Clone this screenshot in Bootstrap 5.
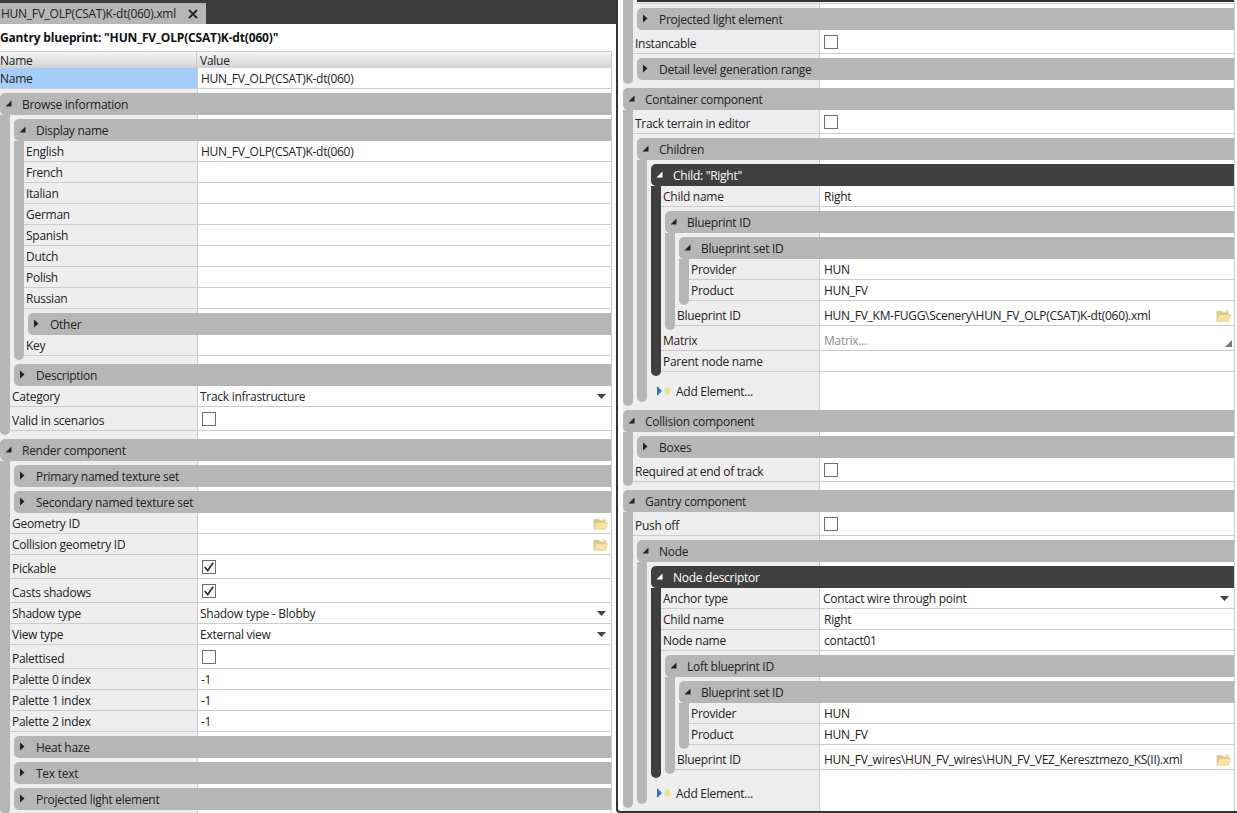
<!doctype html>
<html lang="en"><head><meta charset="utf-8"><title>Gantry blueprint</title>
<link href="https://cdn.jsdelivr.net/npm/bootstrap@5.3.0/dist/css/bootstrap.min.css" rel="stylesheet">
<style>
html,body{height:100%;overflow:hidden;background:#fff}
body{font-family:"Open Sans","Noto Sans",sans-serif;font-size:12px;line-height:21px;color:#222;letter-spacing:-.27px}
.shell{width:1237px;height:813px}
.lpane{width:616px;flex:none}
.rpane{width:621px;flex:none;border-left:2px solid #333;border-bottom:2px solid #333;border-bottom-left-radius:4px;padding-left:5px;padding-right:2px;height:813px;overflow:hidden}
.tabbar{height:24px;background:#3c3c3c;padding-top:3px}
.doc-tab{width:206px;height:21px;background:#b6b6b6;padding-left:1px;line-height:20px}
.doc-tab svg{margin-left:auto;margin-right:8px}
.doc-title{height:27px;font-weight:700;line-height:27px;color:#111;letter-spacing:-.16px}
.sheet{--col:197px;background:linear-gradient(to right,#eee var(--col),#ccc var(--col),#ccc calc(var(--col) + 1px),#fff calc(var(--col) + 1px));border-right:1px solid #ccc}
.rsheet{--col:196px;height:100%}
.lsheet{width:612px}
.hdr{height:17px;background:linear-gradient(#f4f4f4,#d4d4d4);line-height:17px;border-top:1px solid #ccc;border-right:1px solid #ccc}
.hdr>div:first-child{width:197px;border-right:1px solid #ccc}
.hdr>div:last-child{padding-left:3px}
.prow{height:21px;border-bottom:1px solid #ccc}
.prow.tall{height:24px;line-height:23px}
.prow.tall .plabel{padding-top:2px}
.plabel{flex:none;width:calc(var(--col) - var(--ind,0px));padding-left:2px;white-space:nowrap;overflow:hidden}
.plabel.sel{background:#a6cdfa;padding-left:0}
.pvalue{flex:1;padding-left:5px;min-width:0;white-space:nowrap;color:#222}
.lsheet .pvalue{padding-left:4px}
.pvalue.combo{padding-left:4px}
.lsheet .pvalue.combo{padding-left:3px}
.lsheet .cbx{margin-left:1px}
.grp{margin-top:4px}
.grp:first-child.headless{margin-top:0}
.grp .grp{margin-left:4px}
.ghd{height:22px;background:#b6b6b6;border-radius:5px 0 0 5px;display:flex;align-items:center;color:#222}
.ghd .ex{flex:none;width:16px;margin-right:6px;display:flex;justify-content:center;margin-top:-2px;line-height:0}
.ghd .gtxt{padding-top:2px;line-height:20px}
.gbd{display:flex}
.rail{flex:none;width:10px;background:#b6b6b6;border-radius:0 0 5px 5px}
.gin{flex:1;min-width:0;padding-bottom:4px}
.grp.dark>.ghd{background:#3f3f3f;color:#fff}
.grp.dark>.gbd>.rail{background:#3f3f3f}
.lv1{--ind:10px}.lv2{--ind:24px}.lv3{--ind:38px}.lv4{--ind:52px}.lv5{--ind:66px}
.cbx{width:14px;height:14px;border:1px solid #6f6f6f;background:#fff;display:block}
.addrow{height:22px;line-height:21px;padding-top:8px;overflow:visible}
.addrow .plabel{overflow:visible;padding-left:10px;display:flex;align-items:center;gap:4px}
.muted-val{color:#8d8d8d}
.caret{margin-right:5px;flex:none}
.ic-folder{margin-right:3px}
.ic-corner{margin-right:2px;margin-top:6px}
.stub{height:4px;margin-left:4px;border-top:2px solid #333;border-bottom:1px solid #ccc}
</style></head><body>
<div class="shell d-flex">
<div class="lpane">
 <div class="tabbar"><div class="doc-tab d-flex align-items-center"><span>HUN_FV_OLP(CSAT)K-dt(060).xml</span><svg width="10" height="10" viewBox="0 0 10 10"><path d="M1 1l8 8M9 1l-8 8" stroke="#222" stroke-width="1.8"/></svg></div></div>
 <div class="doc-title">Gantry blueprint: "HUN_FV_OLP(CSAT)K-dt(060)"</div>
 <div class="hdr d-flex lsheet"><div>Name</div><div>Value</div></div>
 <div class="sheet lsheet" id="L"></div>
</div>
<div class="rpane"><div class="sheet rsheet" id="R"></div></div>
</div>
<script>
const EX='<svg width="7" height="7" viewBox="0 0 7 7"><path d="M6.5 .5V6.5H.5z" fill="currentColor"/></svg>';
const CO='<svg width="6" height="9" viewBox="0 0 6 9"><path d="M1 .5L5.5 4.5 1 8.5z" fill="currentColor"/></svg>';
const FOLDER='<svg class="caret ic-folder" width="15" height="13" viewBox="0 0 16 13"><path d="M1 2h5l1 1.5h6V12H1z" fill="#e3c77f" stroke="#d8c48e" stroke-width=".7"/><path d="M3.5 5.5H15.5L13 12.5H1z" fill="#f9e5a0" stroke="#dcc68a" stroke-width=".7"/><path d="M10 1.5l3 .5 1 2" stroke="#c4c4c4" fill="none"/></svg>';
const DROP='<svg class="caret" width="9" height="5" viewBox="0 0 9 5"><path d="M0 0h9L4.5 5z" fill="#444"/></svg>';
const CORNER='<svg class="caret ic-corner" width="7" height="7" viewBox="0 0 7 7"><path d="M7 0V7H0z" fill="#777"/></svg>';
const ADD='<svg width="15" height="10" viewBox="0 0 15 10"><path d="M0 0l5 5-5 5z" fill="#2f6fd8"/><path d="M10.5 1v8M6.5 5h8M7.7 2.2l5.6 5.6M13.3 2.2l-5.6 5.6" stroke="#f0e07a" stroke-width="1.2"/></svg>';
const r=(l,v='',o={})=>({t:'r',l,v,...o});
const c=(l,ch)=>({t:'r',l,check:ch?1:0,tall:1});
const g=(l,kids,dark)=>({t:'g',l,kids,dark});
const a=()=>({t:'a'});
const CK='<svg width="12" height="12" viewBox="0 0 12 12" style="display:block"><path d="M1.7 6l3 3.5L10.2 1.8" fill="none" stroke="#333" stroke-width="1.8"/></svg>';
function esc(s){return s.replace(/&/g,'&amp;').replace(/</g,'&lt;')}
function build(items,lv){return items.map(i=>{
 const cl=lv?('lv'+lv):'';
 if(i.t==='s') return '<div class="stub"></div>';
 if(i.t==='r'){
  let val=i.check!==undefined?`<span class="cbx">${i.check?CK:''}</span>`:esc(i.v);
  return `<div class="prow d-flex ${i.tall?'tall':''} ${cl}"><div class="plabel ${i.sel?'sel':''}">${esc(i.l)}</div><div class="pvalue d-flex align-items-center justify-content-between ${i.muted?'muted-val':''} ${i.icon===DROP?'combo':''}"><span>${val}</span>${i.icon||''}</div></div>`;
 }
 if(i.t==='a') return `<div class="addrow d-flex ${cl}"><div class="plabel">${ADD}<span>Add Element...</span></div></div>`;
 const open=!!i.kids;
 const head=i.l?`<div class="ghd"><span class="ex">${open?EX:CO}</span><span class="gtxt">${esc(i.l)}</span></div>`:'';
 return `<div class="grp ${i.dark?'dark':''} ${i.l?'':'headless'}">${head}${open?`<div class="gbd"><div class="rail"></div><div class="gin">${build(i.kids,lv+1)}</div></div>`:''}</div>`;
}).join('')}
const L=[
 {t:'r',l:'Name',v:'HUN_FV_OLP(CSAT)K-dt(060)',sel:1},
 g('Browse information',[
  g('Display name',[
   r('English','HUN_FV_OLP(CSAT)K-dt(060)'),r('French'),r('Italian'),r('German'),r('Spanish'),r('Dutch'),r('Polish'),r('Russian'),
   g('Other'),r('Key')
  ]),
  g('Description'),
  r('Category','Track infrastructure',{icon:DROP}),c('Valid in scenarios')
 ]),
 g('Render component',[
  g('Primary named texture set'),g('Secondary named texture set'),
  r('Geometry ID','',{icon:FOLDER}),r('Collision geometry ID','',{icon:FOLDER}),
  c('Pickable',1),c('Casts shadows',1),
  r('Shadow type','Shadow type - Blobby',{icon:DROP}),r('View type','External view',{icon:DROP}),
  c('Palettised'),r('Palette 0 index','-1'),r('Palette 1 index','-1'),r('Palette 2 index','-1'),
  g('Heat haze'),g('Tex text'),g('Projected light element')
 ])
];
const bp=(file)=>[
 g('Blueprint set ID',[r('Provider','HUN'),r('Product','HUN_FV')]),
 r('Blueprint ID',file,{icon:FOLDER})
];
const R=[
 g('',[
  {t:'s'},
  g('Projected light element'),c('Instancable'),g('Detail level generation range')
 ]),
 g('Container component',[
  c('Track terrain in editor'),
  g('Children',[
   g('Child: "Right"',[
    r('Child name','Right'),
    g('Blueprint ID',bp('HUN_FV_KM-FUGG\\Scenery\\HUN_FV_OLP(CSAT)K-dt(060).xml')),
    r('Matrix','Matrix...',{muted:1,icon:CORNER}),r('Parent node name')
   ],1),
   a()
  ])
 ]),
 g('Collision component',[g('Boxes'),c('Required at end of track')]),
 g('Gantry component',[
  c('Push off'),
  g('Node',[
   g('Node descriptor',[
    r('Anchor type','Contact wire through point',{icon:DROP}),r('Child name','Right'),r('Node name','contact01'),
    g('Loft blueprint ID',bp('HUN_FV_wires\\HUN_FV_wires\\HUN_FV_VEZ_Keresztmezo_KS(II).xml'))
   ],1),
   a()
  ])
 ])
];
document.getElementById('L').innerHTML=build(L,0);
document.getElementById('R').innerHTML=build(R,0);
</script>
<script src="https://cdn.jsdelivr.net/npm/bootstrap@5.3.0/dist/js/bootstrap.bundle.min.js"></script>
</body></html>
